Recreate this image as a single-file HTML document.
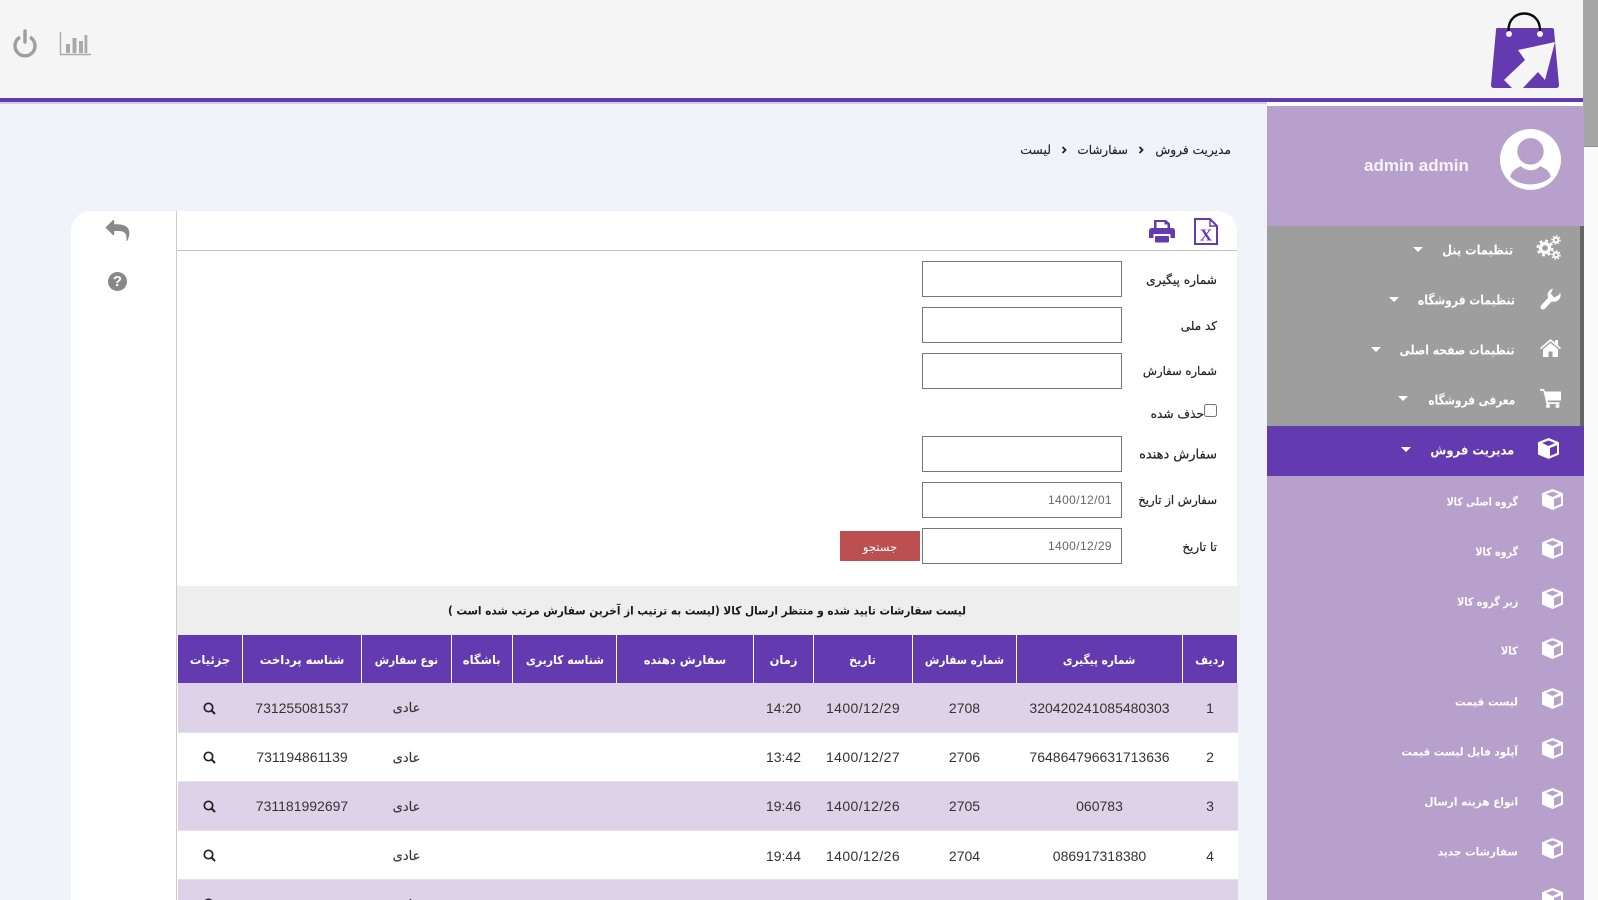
<!DOCTYPE html>
<html lang="fa">
<head>
<meta charset="utf-8">
<title>مدیریت فروش</title>
<style>
html,body{margin:0;padding:0;width:1598px;height:900px;overflow:hidden;background:#f0f3f9;}
body{position:relative;font-family:"Liberation Sans","DejaVu Sans",sans-serif;}
.a{position:absolute;}
.t{position:absolute;white-space:nowrap;font-family:"DejaVu Sans",sans-serif;direction:rtl;transform:translateY(-50%) scaleX(var(--x,1));transform-origin:right center;line-height:1;}
.m{color:#fff;font-size:13px;font-weight:bold;}
.s{color:#fff;font-size:11px;font-weight:bold;}
.l{color:#222;font-size:12px;-webkit-text-stroke:.2px #222;}
.b{color:#222;font-size:12.2px;-webkit-text-stroke:.15px #222;}
.i{position:absolute;left:922px;width:200px;height:36px;box-sizing:border-box;border:1px solid #767676;background:#fff;margin:0;padding:0 9px;font:12px "Liberation Sans",sans-serif;color:#666;text-align:right;letter-spacing:.4px;}
.tri{position:absolute;width:0;height:0;border-left:5.5px solid transparent;border-right:5.5px solid transparent;border-top:5.5px solid #fff;}
svg{position:absolute;overflow:visible;}
table{position:absolute;left:177px;top:635px;width:1060px;border-collapse:collapse;table-layout:fixed;direction:rtl;}
th{height:48px;background:#643ab0;color:#fff;font:bold 12px "DejaVu Sans",sans-serif;border-left:1px solid #fff;border-right:1px solid #fff;padding:1px 0 0;box-sizing:border-box;text-align:center;white-space:nowrap;}
th span{display:inline-block;}
td{height:49.2px;box-sizing:border-box;padding:2px 0 0;text-align:center;font:14px "Liberation Sans",sans-serif;color:#333;border-bottom:1px solid #e6e3ea;white-space:nowrap;}
tbody tr+tr td{padding-top:1px;}
tr.o td{background:#ded2e8;}
tr.e td{background:#fff;}
tbody tr td.f{font:13px "DejaVu Sans",sans-serif;-webkit-text-stroke:.15px #333;padding-top:3px;}
td.d{letter-spacing:.4px;}
td svg{position:relative;display:inline-block;vertical-align:middle;top:-1.5px;left:-.5px;}
</style>
</head>
<body>
<!-- header -->
<div class="a" style="left:0;top:0;width:1583px;height:98px;background:#f5f5f5"></div>
<div class="a" style="left:0;top:98px;width:1583px;height:4px;background:#643ab0"></div>
<div class="a" style="left:0;top:102px;width:1267px;height:2px;background:#d3cedb"></div>
<div class="a" style="left:1267px;top:102px;width:316px;height:4px;background:#fff"></div>

<!-- power icon -->
<svg style="left:13px;top:30px" width="24" height="26" viewBox="0 0 24 26" fill="none" stroke="#9e9e9e" stroke-width="3.4">
<path d="M7 7.2A10 10 0 1 0 17 7.2"/><path d="M12 1v11" stroke-linecap="round"/>
</svg>
<!-- chart icon -->
<svg style="left:60px;top:32px" width="31" height="23" viewBox="0 0 31 23">
<path d="M.5 0v22.5H31" fill="none" stroke="#aaa" stroke-width="1.4"/>
<rect x="6" y="12" width="4" height="9" fill="#aaa"/><rect x="12.5" y="6" width="4" height="15" fill="#aaa"/><rect x="19" y="9" width="4" height="12" fill="#aaa"/><rect x="24.5" y="3" width="2.8" height="18" fill="#aaa"/>
</svg>

<!-- logo -->
<svg style="left:1480px;top:5px" width="90" height="90" viewBox="1480 5 90 90">
<path d="M1497 28H1552Q1554 28 1554 30L1559 85Q1559 88 1556 88H1494Q1491 88 1491 85L1496 30Q1496 28 1497 28Z" fill="#643ab0"/>
<path d="M1508.500 33V30C1508.500 8 1540 8 1540 30V33" fill="none" stroke="#0b0b0b" stroke-width="2.400"/>
<circle cx="1509" cy="34" r="3" fill="#f5f5f5"/><circle cx="1540" cy="34" r="3" fill="#f5f5f5"/>
<polygon points="1555,42 1518,50 1525,60 1504,80 1512,88 1523,88 1538,72 1545,80" fill="#f5f5f5"/>
</svg>

<!-- scrollbar -->
<div class="a" style="left:1584px;top:0;width:14px;height:900px;background:#fafafa"></div>
<div class="a" style="left:1583px;top:0;width:15px;height:147px;background:#a6a6a6;border-bottom:1px solid #8d94a0;box-sizing:border-box"></div>

<!-- sidebar -->
<div class="a" style="left:1267px;top:106px;width:317px;height:120px;background:#b8a0cc"></div>
<div class="a" style="left:1267px;top:226px;width:317px;height:200px;background:#9e9e9e"></div>
<div class="a" style="left:1580px;top:226px;width:4px;height:200px;background:#666"></div>
<div class="a" style="left:1267px;top:426px;width:317px;height:50px;background:#643ab0"></div>
<div class="a" style="left:1267px;top:476px;width:317px;height:424px;background:#b8a0cc"></div>

<svg style="left:1500px;top:129px" width="61" height="61" viewBox="0 0 60 60">
<circle cx="30" cy="30" r="30" fill="#fff"/>
<circle cx="30" cy="22" r="13" fill="#b8a0cc"/>
<path d="M10 47C11 41 17 38 20.500 36.500C26 42 34 42 39.500 36.500C43 38 49 41 50 47C41 57 19 57 10 47Z" fill="#b8a0cc"/>
</svg>
<div class="a" style="left:1364px;top:155px;font:bold 17px/22px 'Liberation Sans',sans-serif;color:#f6f2fa;white-space:nowrap">admin admin</div>

<span class="t m" style="right:85px;top:251px;--x:.875">تنظیمات پنل</span>
<span class="t m" style="right:83px;top:301px;--x:.83">تنظیمات فروشگاه</span>
<span class="t m" style="right:83px;top:351px;--x:.83">تنظیمات صفحه اصلی</span>
<span class="t m" style="right:83px;top:401px;--x:.81">معرفی فروشگاه</span>
<span class="t m" style="right:84px;top:451px;--x:.89">مدیریت فروش</span>
<div class="tri" style="left:1413px;top:247px"></div>
<div class="tri" style="left:1389px;top:297px"></div>
<div class="tri" style="left:1371px;top:347px"></div>
<div class="tri" style="left:1398px;top:396px"></div>
<div class="tri" style="left:1401px;top:447px"></div>

<span class="t s" style="right:80px;top:502px;--x:.86">گروه اصلی کالا</span>
<span class="t s" style="right:80px;top:552px;--x:.87">گروه کالا</span>
<span class="t s" style="right:80px;top:602px;--x:.87">زیر گروه کالا</span>
<span class="t s" style="right:80px;top:651px;--x:.9">کالا</span>
<span class="t s" style="right:80px;top:702px;--x:.955">لیست قیمت</span>
<span class="t s" style="right:80px;top:752px;--x:.94">آپلود فایل لیست قیمت</span>
<span class="t s" style="right:80px;top:802px;--x:.955">انواع هزینه ارسال</span>
<span class="t s" style="right:80px;top:852px;--x:.955">سفارشات جدید</span>

<!-- gears -->
<svg style="left:1536px;top:235px" width="25" height="25" viewBox="0 0 25 25" fill="none" stroke="#fff">
<circle cx="9" cy="13" r="4.500" stroke-width="3.400"/><circle cx="9" cy="13" r="7.400" stroke-width="2.200" stroke-dasharray="2.900 2.900"/>
<circle cx="20" cy="5" r="2.300" stroke-width="1.800"/><circle cx="20" cy="5" r="4" stroke-width="1.500" stroke-dasharray="1.600 1.500"/>
<circle cx="20" cy="20" r="2.300" stroke-width="1.800"/><circle cx="20" cy="20" r="4" stroke-width="1.500" stroke-dasharray="1.600 1.500"/>
</svg>
<!-- wrench -->
<svg style="left:1540px;top:288px" width="21" height="22" viewBox="0 0 21 22">
<path d="M3 19L11 10.500" stroke="#fff" stroke-width="5" stroke-linecap="round"/>
<path d="M20 4.500A6.500 6.500 0 1 1 13 0.800L10.800 5.500L14 9.500L19 7Z" fill="#fff"/>
</svg>
<!-- home -->
<svg style="left:1540px;top:339px" width="21" height="18" viewBox="0 0 21 18" fill="#fff">
<path d="M10.500 0L15 3.800V1H18V6.300L21 9L20 10.300L10.500 2.300L1 10.300L0 9Z"/>
<path d="M10.500 4L18 10.300V18H12.500V12.500H8.500V18H3V10.300Z"/>
</svg>
<!-- cart -->
<svg style="left:1540px;top:389px" width="21" height="19" viewBox="0 0 21 19" fill="#fff">
<path d="M0 0H4L5 2.500H21V11.500H7.500L8 13.300H19.500V15H6.500L3.300 1.800H0Z"/>
<circle cx="8" cy="17" r="2"/><circle cx="17.500" cy="17" r="2"/>
</svg>

<!-- cubes -->
<svg width="0" height="0" style="position:absolute"><defs>
<path id="cb" fill="#fff" fill-rule="evenodd" d="M10.500 0L21 4.200V16.500L10.500 21L0 16.500V4.200ZM10.500 2.500L4 5L10.500 8L17 5ZM12 10V18L19 15V7.200Z"/>
</defs></svg>
<svg style="left:1538px;top:438px" width="21" height="21" viewBox="0 0 21 21"><use href="#cb"/></svg>
<svg style="left:1542px;top:489px" width="21" height="21" viewBox="0 0 21 21"><use href="#cb"/></svg>
<svg style="left:1542px;top:538px" width="21" height="21" viewBox="0 0 21 21"><use href="#cb"/></svg>
<svg style="left:1542px;top:588px" width="21" height="21" viewBox="0 0 21 21"><use href="#cb"/></svg>
<svg style="left:1542px;top:638px" width="21" height="21" viewBox="0 0 21 21"><use href="#cb"/></svg>
<svg style="left:1542px;top:688px" width="21" height="21" viewBox="0 0 21 21"><use href="#cb"/></svg>
<svg style="left:1542px;top:738px" width="21" height="21" viewBox="0 0 21 21"><use href="#cb"/></svg>
<svg style="left:1542px;top:788px" width="21" height="21" viewBox="0 0 21 21"><use href="#cb"/></svg>
<svg style="left:1542px;top:838px" width="21" height="21" viewBox="0 0 21 21"><use href="#cb"/></svg>
<svg style="left:1542px;top:888px" width="21" height="21" viewBox="0 0 21 21"><use href="#cb"/></svg>

<!-- breadcrumb -->
<span class="t b" style="right:367px;top:150px">مدیریت فروش</span>
<span class="t b" style="right:470px;top:150px;font-size:12px">سفارشات</span>
<span class="t b" style="right:547px;top:150px;font-size:12.4px">لیست</span>
<svg style="left:1138px;top:146px" width="6" height="8" viewBox="0 0 6 8"><path d="M1.500 1L4.500 4L1.500 7" fill="none" stroke="#222" stroke-width="1.800"/></svg>
<svg style="left:1061px;top:146px" width="6" height="8" viewBox="0 0 6 8"><path d="M1.500 1L4.500 4L1.500 7" fill="none" stroke="#222" stroke-width="1.800"/></svg>

<!-- card -->
<div class="a" style="left:71px;top:211px;width:1166px;height:689px;background:#fff;border-radius:20px 20px 0 0"></div>
<div class="a" style="left:176px;top:211px;width:1px;height:689px;background:#ccc"></div>
<div class="a" style="left:177px;top:250px;width:1060px;height:1px;background:#c4c4c4"></div>

<svg style="left:107px;top:221px" width="22" height="20" viewBox="130 140 1600 1520"><path fill="#888" d="M1792 1120q0 166-127 451-3 7-10.500 24t-13.500 30-13 22q-12 17-28 17-15 0-23.500-10t-8.500-25q0-9 2.500-26.500t2.500-23.500q5-68 5-123 0-101-17.500-181t-48.500-138.500-80-101-105.500-69.500-133-42.500-154-21.500-175.500-6h-224v256q0 26-19 45t-45 19-45-19l-512-512q-19-19-19-45t19-45l512-512q19-19 45-19t45 19 19 45v256h224q713 0 875 403 53 134 53 333z"/></svg>
<div class="a" style="left:108px;top:272px;width:19px;height:19px;border-radius:50%;background:#888;color:#fff;font:bold 15px/19px 'Liberation Sans',sans-serif;text-align:center">?</div>

<!-- excel -->
<svg style="left:1194px;top:218px" width="24" height="27" viewBox="0 0 24 27">
<path d="M1 1H16L23 8V26H1Z" fill="#fff" stroke="#643ab0" stroke-width="2"/>
<path d="M16 1V8H23" fill="none" stroke="#643ab0" stroke-width="1.400"/>
<text x="12" y="22.500" text-anchor="middle" font-family="Liberation Serif" font-weight="bold" font-size="17" fill="#643ab0">X</text>
</svg>
<!-- print -->
<svg style="left:1149px;top:219px" width="26" height="24" viewBox="0 0 26 24" fill="#643ab0">
<path d="M5 10V1H17L21 4.500V10H18.500V5.500H15.500V3H7.500V10Z"/>
<path d="M3 9H23Q26 9 26 12V19H21.500V15H4.500V19H0V12Q0 9 3 9Z"/>
<rect x="6" y="17" width="14" height="6.500" rx="1"/>
</svg>

<!-- form -->
<span class="t l" style="right:381px;top:280px;font-size:12.2px">شماره پیگیری</span>
<input class="i" style="top:261px" type="text">
<span class="t l" style="right:381px;top:326px;font-size:12px">کد ملی</span>
<input class="i" style="top:307px" type="text">
<span class="t l" style="right:381px;top:372px;font-size:11.6px">شماره سفارش</span>
<input class="i" style="top:353px" type="text">
<input class="a" type="checkbox" style="left:1204px;top:404px;width:13px;height:13px;margin:0">
<span class="t l" style="right:394px;top:414px;font-size:12.2px">حذف شده</span>
<span class="t l" style="right:381px;top:455px;font-size:13px">سفارش دهنده</span>
<input class="i" style="top:436px" type="text">
<span class="t l" style="right:381px;top:501px;font-size:11.7px">سفارش از تاریخ</span>
<input class="i" style="top:482px" type="text" value="1400/12/01">
<span class="t l" style="right:381px;top:547px;font-size:12px">تا تاریخ</span>
<input class="i" style="top:528px" type="text" value="1400/12/29">
<div class="a" style="left:840px;top:531px;width:80px;height:30px;background:#bc5050;color:#fff;font:11.5px/33px 'DejaVu Sans',sans-serif;text-align:center;direction:rtl">جستجو</div>

<!-- title band -->
<div class="a" style="left:177px;top:586px;width:1063px;height:49px;background:#eee"></div>
<span class="t" style="left:448px;top:611px;width:518px;text-align:right;font-size:11.5px;font-weight:bold;color:#1a1a1a;--x:.914">لیست سفارشات تایید شده و منتظر ارسال کالا (لیست به ترتیب از آخرین سفارش مرتب شده است )</span>

<!-- table -->
<table>
<colgroup><col style="width:55px"><col style="width:166px"><col style="width:104px"><col style="width:99px"><col style="width:60px"><col style="width:137px"><col style="width:104px"><col style="width:61px"><col style="width:90px"><col style="width:119px"><col style="width:65px"></colgroup>
<thead><tr>
<th><span style="transform:scaleX(.93)">ردیف</span></th>
<th><span style="transform:scaleX(.88)">شماره پیگیری</span></th>
<th><span style="transform:scaleX(.87)">شماره سفارش</span></th>
<th><span style="transform:scaleX(.92)">تاریخ</span></th>
<th><span style="transform:scaleX(.96)">زمان</span></th>
<th><span style="transform:scaleX(.96)">سفارش دهنده</span></th>
<th><span style="transform:scaleX(.91)">شناسه کاربری</span></th>
<th><span style="transform:scaleX(.96)">باشگاه</span></th>
<th><span style="transform:scaleX(.87)">نوع سفارش</span></th>
<th><span style="transform:scaleX(.96)">شناسه پرداخت</span></th>
<th><span style="transform:scaleX(.96)">جزئیات</span></th>
</tr></thead>
<tbody>
<tr class="o"><td>1</td><td>320420241085480303</td><td>2708</td><td class="d">1400/12/29</td><td>14:20</td><td></td><td></td><td></td><td class="f">عادی</td><td>731255081537</td><td><svg width="13" height="13" viewBox="0 0 13 13"><circle cx="5.500" cy="5.500" r="4.200" fill="none" stroke="#222" stroke-width="1.700"/><path d="M8.500 8.500L12 12" stroke="#222" stroke-width="2"/></svg></td></tr>
<tr class="e"><td>2</td><td>764864796631713636</td><td>2706</td><td class="d">1400/12/27</td><td>13:42</td><td></td><td></td><td></td><td class="f">عادی</td><td>731194861139</td><td><svg width="13" height="13" viewBox="0 0 13 13"><circle cx="5.500" cy="5.500" r="4.200" fill="none" stroke="#222" stroke-width="1.700"/><path d="M8.500 8.500L12 12" stroke="#222" stroke-width="2"/></svg></td></tr>
<tr class="o"><td>3</td><td>060783</td><td>2705</td><td class="d">1400/12/26</td><td>19:46</td><td></td><td></td><td></td><td class="f">عادی</td><td>731181992697</td><td><svg width="13" height="13" viewBox="0 0 13 13"><circle cx="5.500" cy="5.500" r="4.200" fill="none" stroke="#222" stroke-width="1.700"/><path d="M8.500 8.500L12 12" stroke="#222" stroke-width="2"/></svg></td></tr>
<tr class="e"><td>4</td><td>086917318380</td><td>2704</td><td class="d">1400/12/26</td><td>19:44</td><td></td><td></td><td></td><td class="f">عادی</td><td></td><td><svg width="13" height="13" viewBox="0 0 13 13"><circle cx="5.500" cy="5.500" r="4.200" fill="none" stroke="#222" stroke-width="1.700"/><path d="M8.500 8.500L12 12" stroke="#222" stroke-width="2"/></svg></td></tr>
<tr class="o"><td>5</td><td>060060016050</td><td>2703</td><td class="d">1400/12/26</td><td>11:00</td><td></td><td></td><td></td><td class="f">عادی</td><td>731165795036</td><td><svg width="13" height="13" viewBox="0 0 13 13"><circle cx="5.500" cy="5.500" r="4.200" fill="none" stroke="#222" stroke-width="1.700"/><path d="M8.500 8.500L12 12" stroke="#222" stroke-width="2"/></svg></td></tr>
</tbody>
</table>
</body>
</html>
